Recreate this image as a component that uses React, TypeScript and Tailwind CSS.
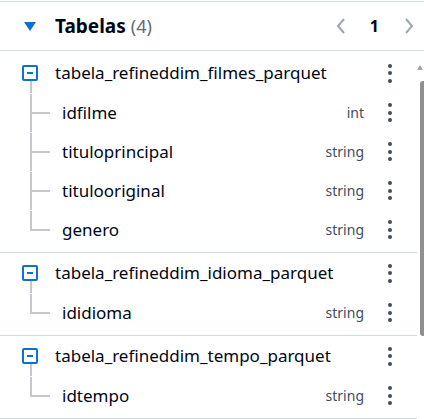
import React from 'react';

type Column = { name: string; type: string };
type Table = { name: string; columns: Column[] };

const tables: Table[] = [
  {
    name: 'tabela_refineddim_filmes_parquet',
    columns: [
      { name: 'idfilme', type: 'int' },
      { name: 'tituloprincipal', type: 'string' },
      { name: 'titulooriginal', type: 'string' },
      { name: 'genero', type: 'string' },
    ],
  },
  {
    name: 'tabela_refineddim_idioma_parquet',
    columns: [{ name: 'ididioma', type: 'string' }],
  },
  {
    name: 'tabela_refineddim_tempo_parquet',
    columns: [{ name: 'idtempo', type: 'string' }],
  },
];

const Kebab = () => (
  <div className="w-[14px] flex flex-col items-center gap-[3.5px]">
    <span className="size-[4px] rounded-full bg-[#414d5c]" />
    <span className="size-[4px] rounded-full bg-[#414d5c]" />
    <span className="size-[4px] rounded-full bg-[#414d5c]" />
  </div>
);

const ColumnRow: React.FC<{ col: Column; last: boolean }> = ({ col, last }) => (
  <div className="h-[39px] flex items-center pr-[20px]">
    <div className="ml-[30px] w-[20px] h-full flex flex-col">
      <div className="h-1/2 border-l-2 border-b-2 border-[#c6c6cd] translate-y-px" />
      <div className={last ? 'flex-1' : 'flex-1 border-l-2 border-[#c6c6cd]'} />
    </div>
    <span className="ml-[12px] flex-1 text-[17px] text-[#000716]">{col.name}</span>
    <span className="text-[14px] text-[#414d5c] mr-[19px]">{col.type}</span>
    <Kebab />
  </div>
);

const TableGroup: React.FC<{ table: Table; first: boolean }> = ({ table, first }) => (
  <div className={(first ? 'pt-[2px] ' : '') + 'pb-[3px] border-b border-[#d5dbdb]'}>
    <div className="h-10 flex items-center pr-[20px]">
      <div className="ml-[22px] w-4 h-full flex flex-col">
        <div className="h-[12px]" />
        <div className="size-4 rounded-[2px] border-2 border-[#0972d3] flex items-center justify-center">
          <span className="w-[6px] h-[2px] bg-[#0972d3]" />
        </div>
        <div className="flex-1 ml-[8px] border-l-2 border-[#c6c6cd]" />
      </div>
      <span className="ml-[17px] flex-1 text-[17px] text-[#000716]">{table.name}</span>
      <Kebab />
    </div>
    {table.columns.map((c, i) => (
      <ColumnRow key={c.name} col={c} last={i === table.columns.length - 1} />
    ))}
  </div>
);

export default function App() {
  return (
    <div className="w-[424px] h-[419px] overflow-hidden bg-white" style={{ fontFamily: '"Noto Sans", sans-serif' }}>
      <div className="mt-px border-t border-[#d5dbdb]" />
      <div className="h-[49px] flex items-center border-b border-[#d5dbdb]">
        <svg className="ml-[24px]" width="12" height="9" viewBox="0 0 12 9">
          <path d="M0 0 H12 L6 9 Z" fill="#0972d3" />
        </svg>
        <span className="ml-[19px] text-[19px] font-bold text-[#000716] leading-none">Tabelas</span>
        <span className="ml-[5px] text-[18px] text-[#5f6b7a] leading-none">(4)</span>
        <div className="ml-auto flex items-center">
          <svg width="10" height="16" viewBox="0 0 10 16" className="mr-[24px]">
            <path d="M8 1 L2 8 L8 15" fill="none" stroke="#9ba7b6" strokeWidth="2" />
          </svg>
          <span className="text-[16px] font-bold text-[#000716]">1</span>
          <svg width="10" height="16" viewBox="0 0 10 16" className="ml-[25px] mr-[10px]">
            <path d="M2 1 L8 8 L2 15" fill="none" stroke="#9ba7b6" strokeWidth="2" />
          </svg>
        </div>
      </div>
      <div className="flex">
        <div className="w-[417px]">
          {tables.map((t, i) => (
            <TableGroup key={t.name} table={t} first={i === 0} />
          ))}
        </div>
        <div className="flex-1 flex flex-col items-end pt-[13px]">
          <svg width="6" height="6" viewBox="0 0 6 6" className="mr-[1px]">
            <path d="M0 6 L3 1 L6 6 Z" fill="#a3a3a3" />
          </svg>
          <div className="mt-[11px] w-[4px] h-[255px] rounded-l-[3px] bg-[#8f8f8f]" />
        </div>
      </div>
    </div>
  );
}
